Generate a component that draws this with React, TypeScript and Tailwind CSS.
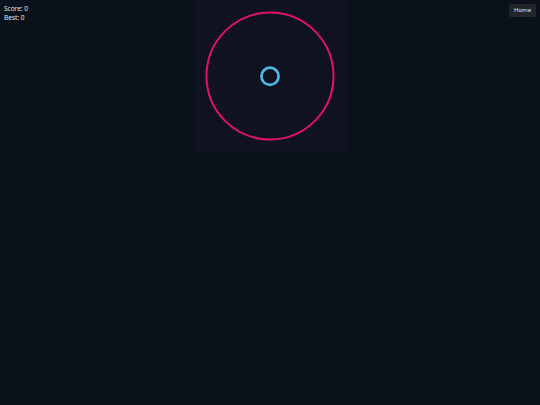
export default function App() {
  return (
    <div className="relative h-[405px] w-[540px] overflow-hidden bg-[#0b111a] font-['Noto_Sans',sans-serif] text-white">
      <div className="absolute left-1 top-[4px] text-[6.5px] leading-[9px] text-gray-200">
        <div>Score: 0</div>
        <div>Best: 0</div>
      </div>
      <button className="absolute right-[4px] top-[4px] flex h-[13px] w-[27px] items-center justify-center rounded-[2px] bg-[#222529] text-[6px] text-gray-200">
        Home
      </button>
      <div className="flex justify-center">
        <div className="h-[152px] w-[152px] bg-[#10131f]">
          <svg width="152" height="152" viewBox="0 0 152 152">
            <circle cx="76" cy="76" r="63.5" fill="none" stroke="#e0136c" strokeWidth="2" />
            <circle cx="76" cy="76.3" r="8.6" fill="none" stroke="#4fb7e3" strokeWidth="2.8" />
          </svg>
        </div>
      </div>
    </div>
  );
}
